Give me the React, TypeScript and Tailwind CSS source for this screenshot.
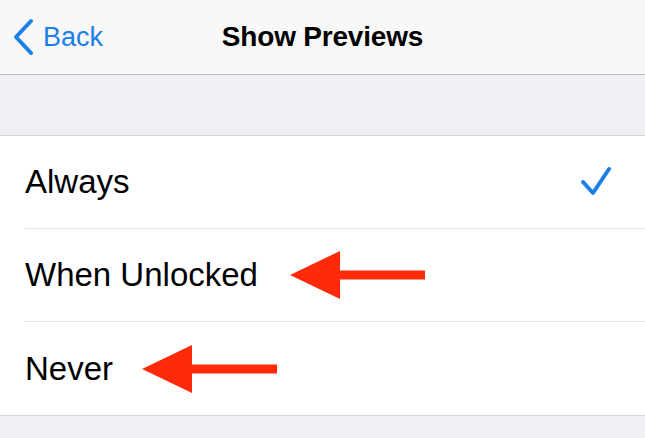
const rows = [
    { label: 'Always', checked: true, arrow: '' },
    { label: 'When Unlocked', checked: false, arrow: 'left-[265px]' },
    { label: 'Never', checked: false, arrow: 'left-[117px]' },
];

function RedArrow({ className }: { className: string }) {
    return (
        <svg
            className={`absolute top-1/2 -translate-y-1/2 ${className}`}
            width="135"
            height="48"
            viewBox="0 0 135 48"
        >
            <path d="M0 24 L50 0 L50 19.5 L135 19.5 L135 28.5 L50 28.5 L50 48 Z" fill="#ff2a0a" />
        </svg>
    );
}

export default function App() {
    return (
        <div className="w-[645px] h-[438px] bg-[#efeff4] overflow-hidden font-['Liberation_Sans',Arial,sans-serif]">
            {/* Navigation bar */}
            <div className="h-[75px] bg-[#f8f8f8] border-b border-[#b9b9bd] grid grid-cols-[1fr_auto_1fr] items-center">
                <div className="flex items-center text-[#1b7fe8]">
                    <svg className="ml-[11px]" width="24" height="38" viewBox="0 0 24 38" fill="none">
                        <path d="M20 3 L5 19 L20 35" stroke="currentColor" strokeWidth="4" strokeLinecap="round" strokeLinejoin="round" />
                    </svg>
                    <span className="ml-[8px] text-[27px] leading-none">Back</span>
                </div>
                <div className="text-[28px] font-bold text-black tracking-[-0.2px]">Show Previews</div>
                <div />
            </div>

            {/* Options */}
            <div className="mt-[60px] bg-white border-y border-[#d6d6da]">
                {rows.map((row, i) => (
                    <div key={row.label} className="pl-[25px]">
                        <div
                            className={`relative h-[93px] flex items-center justify-between pr-[33px] ${
                                i < rows.length - 1 ? 'border-b border-[#e4e4e8]' : ''
                            }`}
                        >
                            <span className="text-[33px] text-black">{row.label}</span>
                            {row.checked && (
                                <svg width="32" height="32" viewBox="0 0 32 32" fill="none" className="text-[#1b7fe8]">
                                    <path d="M3 16 L13 27 L29 3" stroke="currentColor" strokeWidth="4" strokeLinecap="round" strokeLinejoin="round" />
                                </svg>
                            )}
                            {row.arrow && <RedArrow className={row.arrow} />}
                        </div>
                    </div>
                ))}
            </div>
        </div>
    );
}
